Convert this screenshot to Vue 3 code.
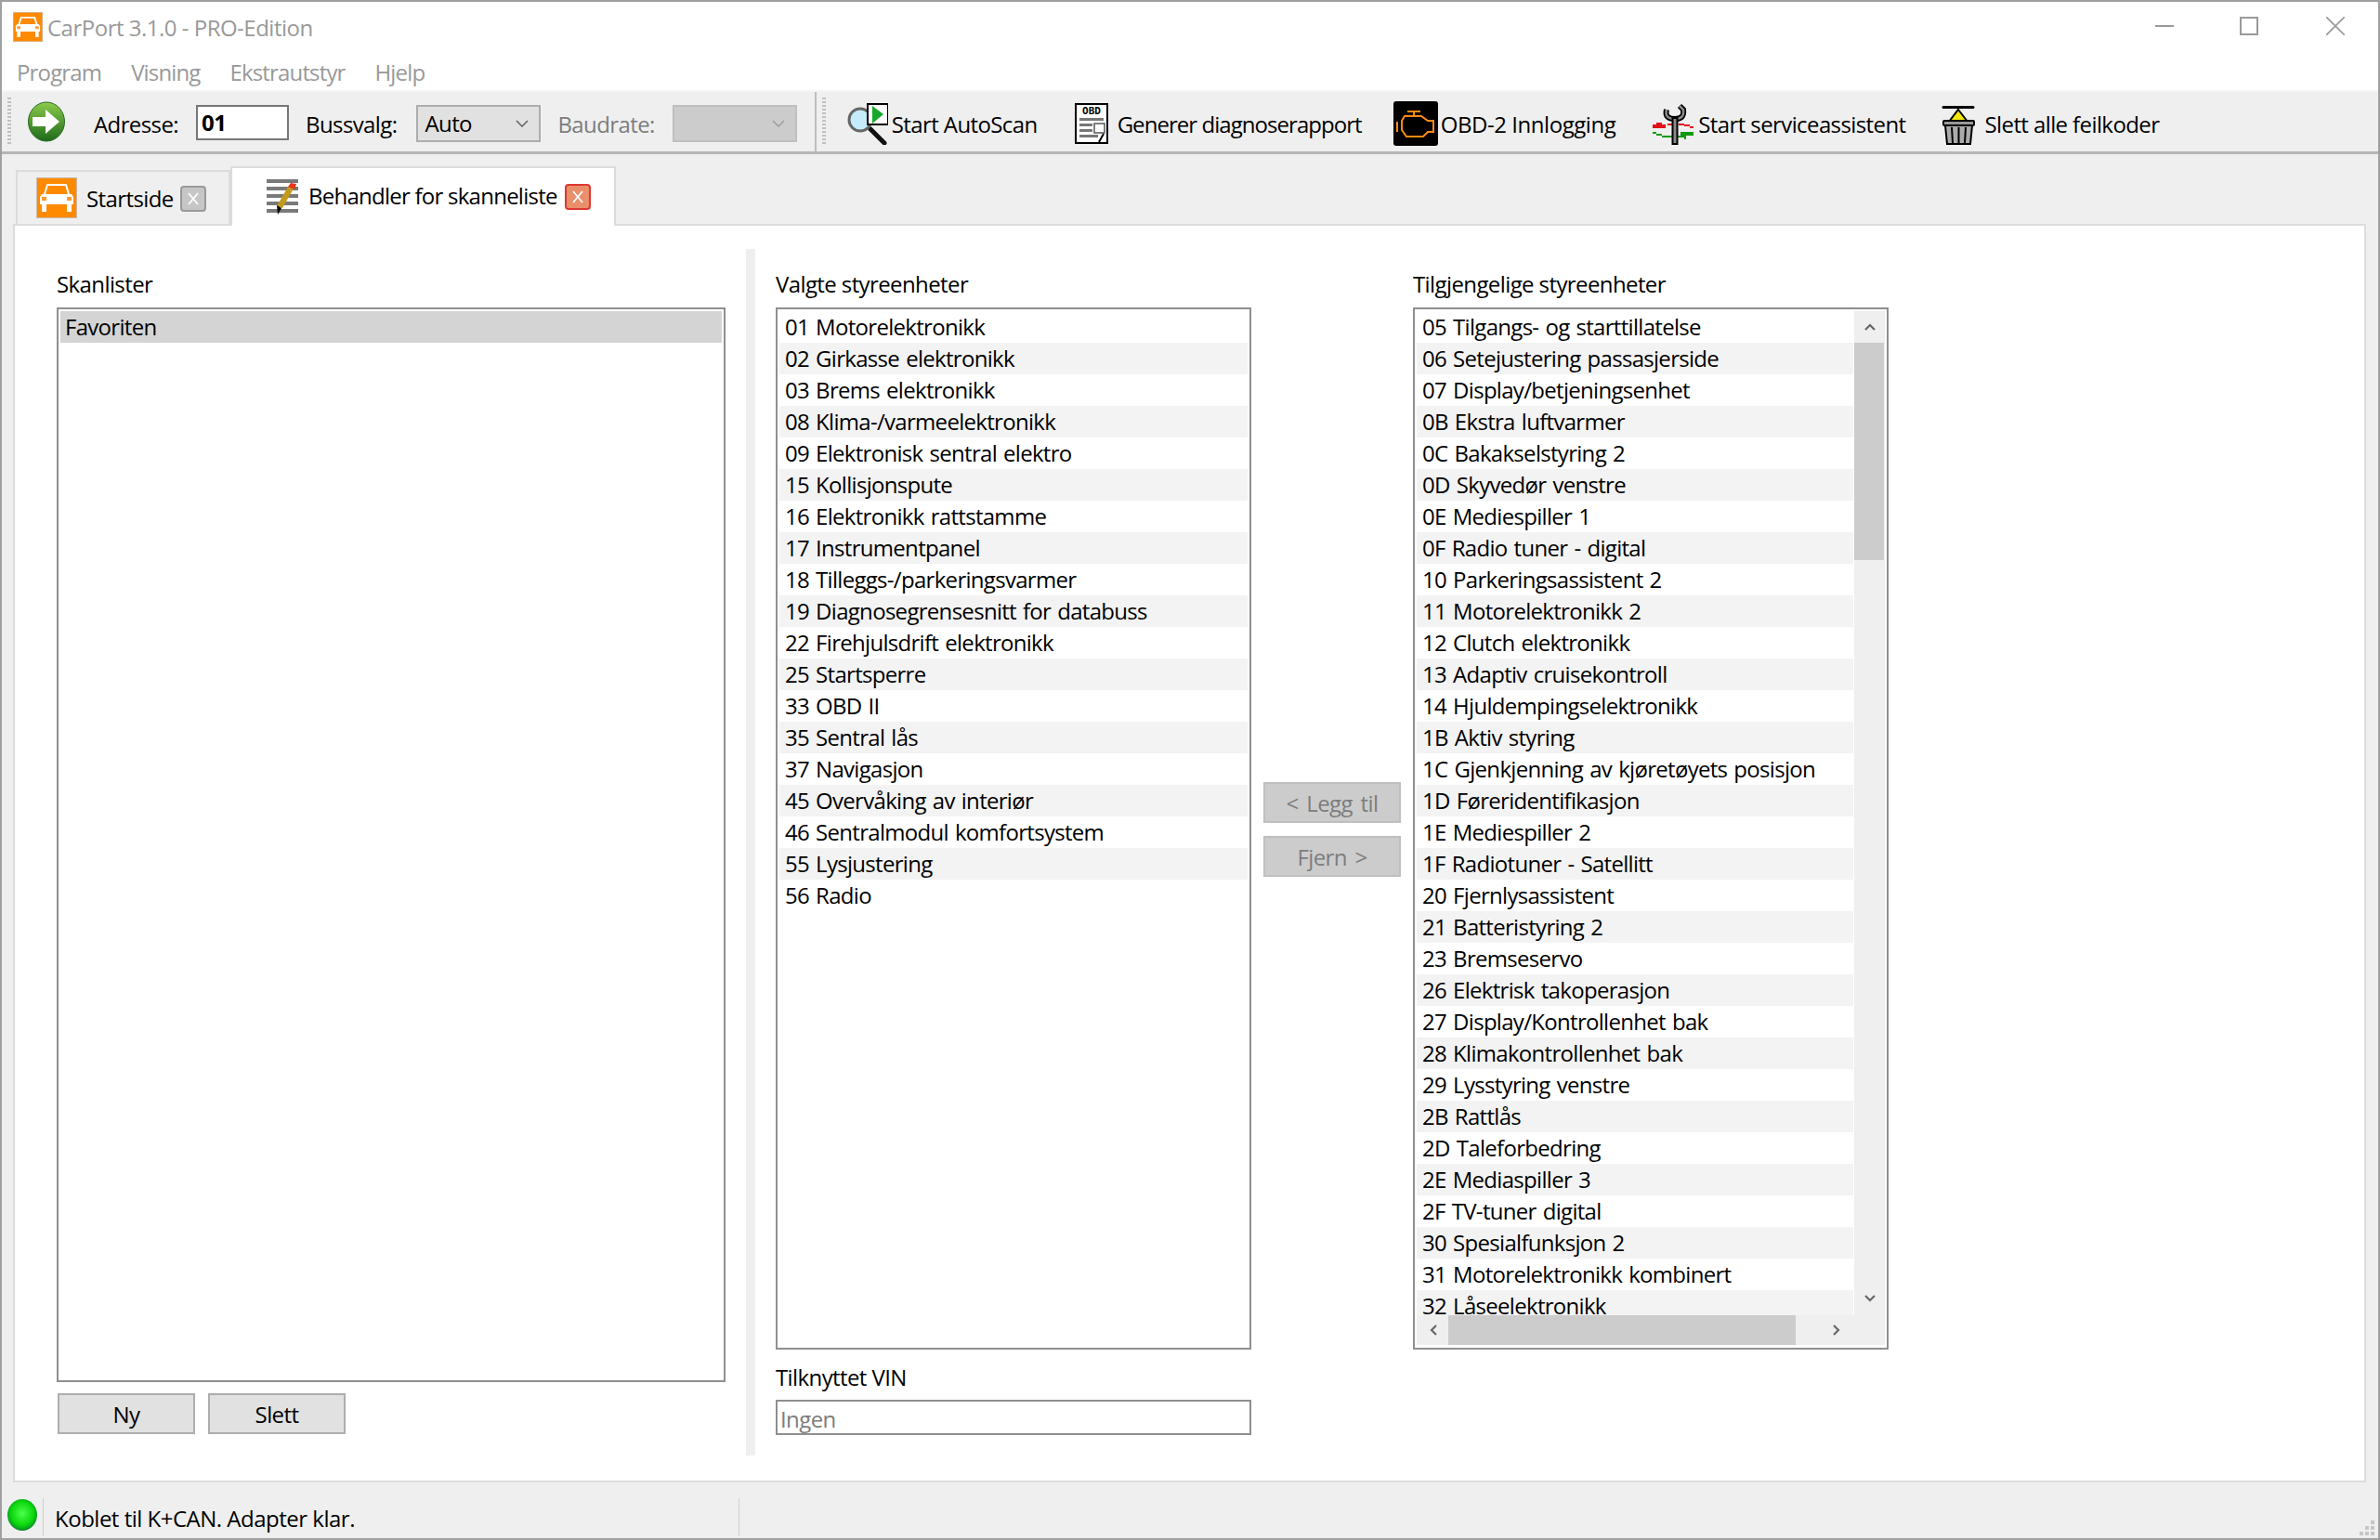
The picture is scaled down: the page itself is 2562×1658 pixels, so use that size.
<script setup>
const selected = ['01 Motorelektronikk','02 Girkasse elektronikk','03 Brems elektronikk','08 Klima-/varmeelektronikk','09 Elektronisk sentral elektro','15 Kollisjonspute','16 Elektronikk rattstamme','17 Instrumentpanel','18 Tilleggs-/parkeringsvarmer','19 Diagnosegrensesnitt for databuss','22 Firehjulsdrift elektronikk','25 Startsperre','33 OBD II','35 Sentral lås','37 Navigasjon','45 Overvåking av interiør','46 Sentralmodul komfortsystem','55 Lysjustering','56 Radio']
const available = ['05 Tilgangs- og starttillatelse','06 Setejustering passasjerside','07 Display/betjeningsenhet','0B Ekstra luftvarmer','0C Bakakselstyring 2','0D Skyvedør venstre','0E Mediespiller 1','0F Radio tuner - digital','10 Parkeringsassistent 2','11 Motorelektronikk 2','12 Clutch elektronikk','13 Adaptiv cruisekontroll','14 Hjuldempingselektronikk','1B Aktiv styring','1C Gjenkjenning av kjøretøyets posisjon','1D Føreridentifikasjon','1E Mediespiller 2','1F Radiotuner - Satellitt','20 Fjernlysassistent','21 Batteristyring 2','23 Bremseservo','26 Elektrisk takoperasjon','27 Display/Kontrollenhet bak','28 Klimakontrollenhet bak','29 Lysstyring venstre','2B Rattlås','2D Taleforbedring','2E Mediaspiller 3','2F TV-tuner digital','30 Spesialfunksjon 2','31 Motorelektronikk kombinert','32 Låseelektronikk']
</script>

<template>
  <div class="win">
    <div class="title">
      <svg class="appicon" width="32" height="32" viewBox="0 0 44 44"><rect width="44" height="44" fill="#ff8a00" stroke="#c9b8a8" stroke-width="2"/><path d="M9 18l3-10h20l3 10" fill="none" stroke="#fff" stroke-width="2.500"/><path d="M6 18h32l2 3v8H4v-8z" fill="#fff"/><path d="M6 29h5v8H6zM33 29h5v8h-5z" fill="#fff"/><rect x="6" y="21" width="5" height="4" fill="#ff9a30"/><rect x="33" y="21" width="5" height="4" fill="#ff9a30"/></svg>
      <span class="title-text">CarPort 3.1.0 - PRO-Edition</span>
      <div class="winbtns">
        <i class="min"></i>
        <i class="max"></i>
        <svg width="20" height="20" viewBox="0 0 20 20"><path d="M0 0L20 20M20 0L0 20" stroke="#999" stroke-width="1.600"/></svg>
      </div>
    </div>
    <div class="menu"><span>Program</span><span>Visning</span><span>Ekstrautstyr</span><span>Hjelp</span></div>
    <div class="toolbar">
      <div class="grip"></div>
      <svg class="go" width="40" height="44" viewBox="0 0 40 44"><defs><linearGradient id="gg" x1="0" y1="0" x2="0" y2="1"><stop offset="0" stop-color="#8bcb4a"/><stop offset="1" stop-color="#1d6a1b"/></linearGradient></defs><ellipse cx="20" cy="22" rx="19.500" ry="21" fill="url(#gg)" stroke="#2b6b22"/><path d="M5 17h14V9l15 13-15 13v-8H5z" fill="#fff"/></svg>
      <span class="lbl l-adr">Adresse:</span>
      <div class="addr">01</div>
      <span class="lbl l-bus">Bussvalg:</span>
      <div class="combo c-auto">Auto<svg width="14" height="8" viewBox="0 0 14 8"><path d="M1 1l6 6 6-6" fill="none" stroke="#555" stroke-width="1.300"/></svg></div>
      <span class="lbl dis l-baud">Baudrate:</span>
      <div class="combo off"><svg width="14" height="8" viewBox="0 0 14 8"><path d="M1 1l6 6 6-6" fill="none" stroke="#999" stroke-width="1.300"/></svg></div>
      <div class="tsep"></div>
      <div class="grip g2"></div>
      <div class="tool t1">
        <svg width="46" height="46" viewBox="8 4 46 46"><path d="M35 33l15 15" stroke="#111" stroke-width="5" stroke-linecap="round"/><circle cx="24" cy="23" r="12" fill="#c4ecfa" stroke="#666" stroke-width="3"/><rect x="32" y="6" width="22" height="22" fill="#fff" stroke="#000" stroke-width="2"/><path d="M37 8l12 9-12 10z" fill="#16a82a"/></svg>
        <span>Start AutoScan</span>
      </div>
      <div class="tool t2">
        <svg width="36" height="44" viewBox="0 0 36 44"><rect x="1" y="1" width="34" height="42" fill="#fff" stroke="#000" stroke-width="2"/><text x="18" y="12" class="obdt">OBD</text><path d="M5 16h26v3H5zM5 22h14v3H5zM5 28h14v3H5zM5 34h20v3H5z" fill="#777"/><rect x="21" y="22" width="11" height="10" fill="#fff" stroke="#555" stroke-width="1.500"/><path d="M31 33l-5 9" stroke="#000" stroke-width="2"/></svg>
        <span>Generer diagnoserapport</span>
      </div>
      <div class="tool t3">
        <svg width="48" height="48" viewBox="0 0 48 48"><rect width="48" height="48" rx="3" fill="#000"/><path d="M15 11H29M22 11V16M12 16H30L37 21H43V33H37L32 38H14L9 31V21Z" fill="none" stroke="#ff8a12" stroke-width="2"/><path d="M4 22V33" stroke="#ff8a12" stroke-width="2"/></svg>
        <span>OBD-2 Innlogging</span>
      </div>
      <div class="tool t4">
        <svg width="46" height="48" viewBox="8 8 46 48"><path d="M9 33h14v4H9zM13 31h6v2h-6zM25 32h6v2h-6zM37 32h6v2h-6zM43 33h6v2h-6zM49 35h4v2h-4z" fill="#e0101a"/><path d="M9 41h4v2H9zM13 43h6v2h-6zM19 45h26v2H19zM39 41h14v4H39zM43 47h2v2h-2z" fill="#109a10"/><path d="M24 17C22 24 26 27 33 27C40 27 43 24 42 17L38 13" fill="none" stroke="#000" stroke-width="6"/><path d="M24 17C22 24 26 27 33 27C40 27 43 24 42 17L38 13" fill="none" stroke="#8a8a8a" stroke-width="2.500"/><rect x="29.500" y="25" width="7" height="30" fill="#000"/><rect x="31.500" y="27" width="3" height="26" fill="#8a8a8a"/></svg>
        <span>Start serviceassistent</span>
      </div>
      <div class="tool t5">
        <svg width="38" height="46" viewBox="8 8 38 46"><path d="M10 13.500h32" stroke="#000" stroke-width="3" stroke-linecap="round"/><path d="M26 16L36 29H16z" fill="#f2e70f" stroke="#000" stroke-width="2"/><rect x="10" y="28" width="33" height="5" rx="1" fill="#999" stroke="#000" stroke-width="2"/><path d="M12 33l2 20h25l2-20z" fill="#aaa" stroke="#000" stroke-width="2"/><path d="M19 35l1 17M26.500 35v17M34 35l-1 17" stroke="#000" stroke-width="2"/></svg>
        <span>Slett alle feilkoder</span>
      </div>
    </div>
    <div class="tabs">
      <div class="tab inactive">
        <svg width="44" height="44" viewBox="0 0 44 44"><rect width="44" height="44" fill="#ff8a00" stroke="#c9b8a8" stroke-width="2"/><path d="M9 18l3-10h20l3 10" fill="none" stroke="#fff" stroke-width="2"/><path d="M6 18h32l2 3v8H4v-8z" fill="#fff"/><path d="M6 29h5v8H6zM33 29h5v8h-5z" fill="#fff"/><rect x="6" y="21" width="5" height="4" fill="#ff9a30"/><rect x="33" y="21" width="5" height="4" fill="#ff9a30"/></svg>
        <span>Startside</span>
        <svg class="x xg" width="28" height="28" viewBox="0 0 28 28"><rect x="1" y="1" width="26" height="26" rx="3" fill="#c6c6c6" stroke="#999" stroke-width="2"/><path d="M9 8l10 12M19 8L9 20" stroke="#fff" stroke-width="1.800"/></svg>
      </div>
      <div class="tab active">
        <svg class="pen" width="34" height="38" viewBox="0 0 34 38"><path d="M0 0h34v4H0zM0 8h34v4H0zM0 16h34v4H0zM0 24h34v4H0zM0 32h34v4H0z" fill="#7a7a7a"/><path d="M29 10L17 31l-6-2L23 8z" fill="#c49a1e"/><path d="M23 8l3-4 6 1-2 6z" fill="#e8351a"/><path d="M11 28l5 3-4 7z" fill="#000"/></svg>
        <span>Behandler for skanneliste</span>
        <svg class="x xr" width="28" height="28" viewBox="0 0 28 28"><rect x="1" y="1" width="26" height="26" rx="3" fill="#ea8f6c" stroke="#dc3a30" stroke-width="2"/><path d="M9 8l10 12M19 8L9 20" stroke="#fff" stroke-width="1.800"/></svg>
      </div>
    </div>
    <div class="pane">
      <section class="col c1">
        <div class="cap">Skanlister</div>
        <div class="box tall"><div class="row sel">Favoriten</div></div>
        <div class="btns"><div class="btn">Ny</div><div class="btn">Slett</div></div>
      </section>
      <div class="divider"></div>
      <section class="col c2">
        <div class="cap">Valgte styreenheter</div>
        <div class="box list">
          <div v-for="(s, i) in selected" :key="s" class="row" :class="{ alt: i % 2 }">{{ s }}</div>
        </div>
        <div class="cap vin">Tilknyttet VIN</div>
        <div class="vinbox">Ingen</div>
      </section>
      <section class="mid">
        <div class="btn dis">&lt; Legg til</div>
        <div class="btn dis">Fjern &gt;</div>
      </section>
      <section class="col c3">
        <div class="cap">Tilgjengelige styreenheter</div>
        <div class="box list scroll">
          <div class="items">
            <div v-for="(s, i) in available" :key="s" class="row" :class="{ alt: i % 2 }">{{ s }}</div>
          </div>
          <div class="vbar">
            <svg width="12" height="8" viewBox="0 0 12 8"><path d="M1 7l5-5 5 5" fill="none" stroke="#666" stroke-width="2.200"/></svg>
            <div class="vtrack"><div class="vthumb"></div></div>
            <svg width="12" height="8" viewBox="0 0 12 8"><path d="M1 1l5 5 5-5" fill="none" stroke="#666" stroke-width="2.200"/></svg>
          </div>
          <div class="hbar">
            <svg width="8" height="12" viewBox="0 0 8 12"><path d="M7 1L2 6l5 5" fill="none" stroke="#666" stroke-width="2.200"/></svg>
            <div class="hthumb"></div>
            <svg width="8" height="12" viewBox="0 0 8 12"><path d="M1 1l5 5-5 5" fill="none" stroke="#666" stroke-width="2.200"/></svg>
          </div>
        </div>
      </section>
    </div>
    <div class="status">
      <svg width="32" height="34" viewBox="0 0 32 34"><defs><radialGradient id="led" cx="0.500" cy="0.450" r="0.550"><stop offset="0" stop-color="#4dff4d"/><stop offset="0.700" stop-color="#0ad60a"/><stop offset="1" stop-color="#0a8a2a"/></radialGradient></defs><ellipse cx="16" cy="17" rx="16" ry="17" fill="url(#led)"/></svg>
      <div class="ssep s1"></div>
      <span class="stext">Koblet til K+CAN. Adapter klar.</span>
      <div class="ssep s2"></div>
      <div class="resize"><i v-for="n in 6" :key="n"></i></div>
    </div>
  </div>
</template>

<style>
html, body { margin: 0; padding: 0; background: #fff; }
</style>

<style scoped>
.win { width: 2562px; height: 1658px; box-sizing: border-box; border: 2px solid #a0a0a0; background: #efefef; display: flex; flex-direction: column; font-family: "Open Sans", "Noto Sans", sans-serif; font-size: 24px; color: #000; overflow: hidden; letter-spacing: -0.6px; }
.title { height: 57px; background: #fff; display: flex; align-items: center; padding-left: 12px; padding-bottom: 2px; box-sizing: border-box; flex: none; }
.appicon { margin-right: 5px; margin-top: -2px; }
.title-text { color: #999; letter-spacing: -0.5px; }
.winbtns { margin-left: auto; display: flex; align-items: center; margin-right: 36px; margin-top: -3px; }
.min { width: 20px; height: 2px; background: #999; margin-right: 71px; }
.max { width: 16px; height: 16px; border: 2px solid #999; margin-right: 73px; }
.menu { background: #fff; border-bottom: 2px solid #f5f5f5; display: flex; gap: 32px; padding: 2px 0 0 16px; box-sizing: content-box; height: 36px; color: #999; align-items: flex-start; flex: none; letter-spacing: -0.85px; }
.toolbar { height: 61px; padding: 3px 0 0 28px; flex: none; border-bottom: 3px solid #b5b5b5; display: flex; align-items: center; position: relative; box-sizing: content-box; }
.toolbar span { padding-top: 2px; }
.grip { position: absolute; left: 6px; top: 6px; width: 4px; height: 52px; background: repeating-linear-gradient(#c0c0c0 0 2px, transparent 2px 4px); }
.g2 { left: 883px; }
.go { flex: none; margin-top: -4px; }
.lbl { flex: none; }
.l-adr { margin-left: 31px; }
.addr { flex: none; margin-left: 19px; width: 100px; height: 38px; margin-top: -2px; box-sizing: border-box; background: #fff; border: 2px solid #777; font-weight: 700; padding-left: 4px; line-height: 34px; }
.l-bus { margin-left: 18px; }
.combo { flex: none; width: 134px; height: 40px; box-sizing: border-box; background: #e1e1e1; border: 2px solid #adadad; display: flex; align-items: center; padding: 0 7px; justify-content: space-between; }
.c-auto { margin-left: 21px; }
.combo svg { margin-left: auto; margin-right: 4px; }
.combo.off { background: #ccc; border-color: #bfbfbf; margin-left: 19px; }
.l-baud { margin-left: 18px; color: #7d7d7d; }
.tsep { flex: none; width: 2px; height: 64px; background: #bdbdbd; margin: -3px 0 0 19px; }
.tool { flex: none; display: flex; align-items: center; gap: 4px; }
.t1 { margin-left: 31px; }
.t2 { margin-left: 40px; gap: 10px; letter-spacing: -0.95px; }
.t3 { margin-left: 34px; gap: 3px; letter-spacing: -0.45px; }
.t4 { margin-left: 39px; gap: 4px; }
.t5 { margin-left: 38px; gap: 9px; }
.tabs { height: 77px; flex: none; display: flex; align-items: flex-end; padding-left: 15px; box-sizing: border-box; position: relative; z-index: 1; margin-bottom: -2px; }
.tab { display: flex; align-items: center; box-sizing: border-box; border: 2px solid #dcdcdc; }
.inactive { width: 231px; height: 58px; padding-left: 20px; gap: 10px; background: #efefef; margin-bottom: 2px; border-bottom: 0; }
.active { width: 415px; height: 64px; padding-left: 37px; gap: 11px; background: #fff; padding-bottom: 4px; border-bottom: 0; letter-spacing: -0.75px; }
.pen { margin-top: 4px; }
.x { flex: none; margin-left: -3px; }
.xg { margin-top: 2px; }
.xr { margin-top: 4px; }
.pane { height: 1355px; flex: none; margin: 0 13px 0 12px; box-sizing: border-box; background: #fff; border: 2px solid #dcdcdc; padding: 25px 0 0 45px; display: flex; align-items: flex-start; }
.col { display: flex; flex-direction: column; padding-top: 19px; flex: none; }
.c1 { width: 720px; }
.divider { width: 10px; height: 1299px; background: #efefef; margin: 0 22px; flex: none; }
.c2 { width: 512px; }
.c3 { width: 512px; }
.cap { height: 44px; line-height: 38px; }
.box { border: 2px solid #8f8f8f; box-sizing: border-box; background: #fff; padding: 2px; }
.tall { height: 1157px; }
.list { height: 1122px; overflow: hidden; }
.row { height: 34px; line-height: 33px; padding-left: 6px; white-space: nowrap; background: #fff; letter-spacing: -0.7px; word-spacing: 1.5px; }
.row.alt { background: #f3f3f3; }
.row.sel { background: #d4d4d4; padding-left: 5px; }
.btns { display: flex; gap: 14px; margin: 12px 0 0 1px; }
.btn { width: 148px; height: 44px; box-sizing: border-box; background: #e1e1e1; border: 2px solid #adadad; text-align: center; line-height: 41px; }
.btn.dis { background: #ccc; border-color: #bfbfbf; color: #7d7d7d; word-spacing: 3px; }
.vin { margin-top: 8px; height: 46px; line-height: 44px; }
.vinbox { height: 38px; box-sizing: border-box; border: 2px solid #8f8f8f; color: #7d7d7d; padding-left: 3px; line-height: 38px; }
.mid { display: flex; flex-direction: column; gap: 14px; padding-top: 574px; margin: 0 13px; flex: none; }
.scroll { position: relative; padding: 2px 2px 3px 2px; }
.items { height: 1081px; width: 470px; overflow: hidden; }
.vbar { position: absolute; right: 2px; top: 2px; width: 33px; height: 1081px; background: #efefef; display: flex; flex-direction: column; align-items: center; justify-content: space-between; padding: 13px 0 14px; box-sizing: border-box; }
.vtrack { flex: 1; width: 100%; padding-top: 13px; }
.vthumb { height: 234px; width: 32px; background: #ccc; }
.hbar { height: 32px; background: #efefef; display: flex; align-items: center; position: relative; width: 504px; }
.hbar svg:first-child { margin-left: 14px; }
.hthumb { position: absolute; left: 34px; width: 374px; top: 0; height: 32px; background: #ccc; }
.hbar svg:last-child { position: absolute; left: 448px; }
.status { flex: 1; position: relative; display: flex; align-items: center; padding: 10px 0 0 6px; box-sizing: border-box; }
.ssep { position: absolute; top: 17px; width: 1px; height: 41px; background: #d0d0d0; }
.s1 { left: 44px; }
.s2 { left: 793px; }
.stext { margin-left: 19px; padding-top: 6px; letter-spacing: -0.5px; }
.resize { position: absolute; right: 4px; bottom: 3px; width: 16px; height: 16px; display: grid; grid-template-columns: repeat(3, 4px); gap: 2px; direction: rtl; }
.resize i { width: 4px; height: 4px; background: #c6c6c6; }
.resize i:nth-child(1) { grid-area: 1 / 1; }
.resize i:nth-child(2) { grid-area: 2 / 1; }
.resize i:nth-child(3) { grid-area: 2 / 2; }
.resize i:nth-child(4) { grid-area: 3 / 1; }
.resize i:nth-child(5) { grid-area: 3 / 2; }
.resize i:nth-child(6) { grid-area: 3 / 3; }
.obdt { font: 700 11px "DejaVu Sans Mono", monospace; text-anchor: middle; letter-spacing: 0; }
</style>
